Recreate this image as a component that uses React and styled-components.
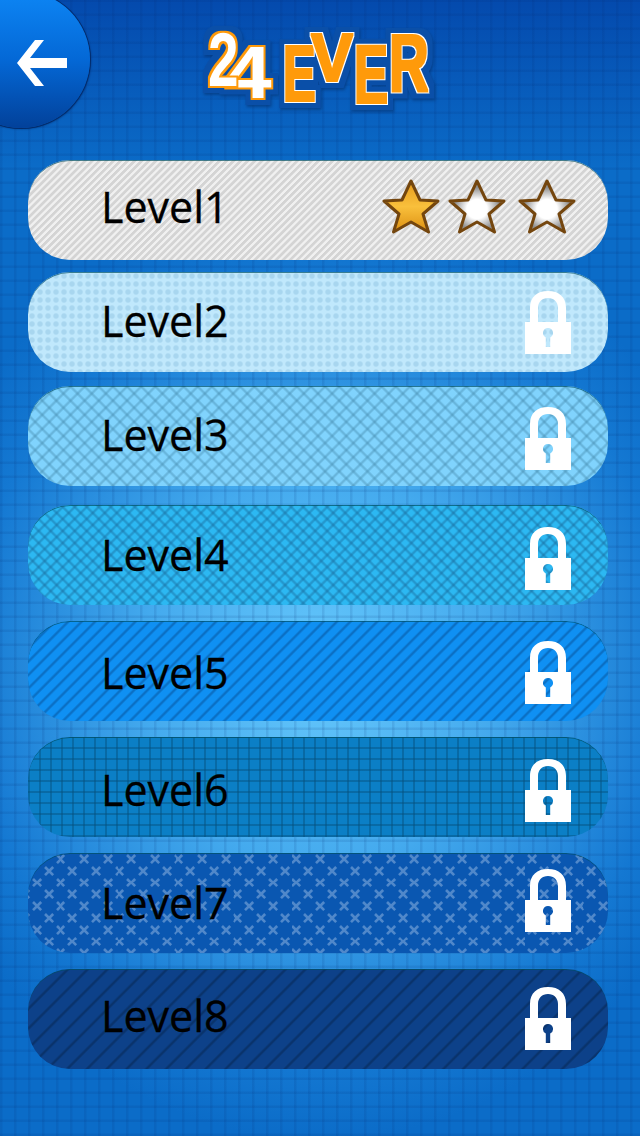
import React from "react";
import styled, { createGlobalStyle, css } from "styled-components";

const GlobalStyle = createGlobalStyle`
  html, body { margin: 0; padding: 0; }
  body { font-family: "Open Sans", "DejaVu Sans", sans-serif; }
`;

const crossTile = encodeURIComponent(
  `<svg xmlns="http://www.w3.org/2000/svg" width="23.6" height="23.6"><g stroke="#7ba6da" stroke-width="2.6" stroke-opacity=".62"><path d="M2 2l8 8M10 2l-8 8M13.8 13.8l8 8M21.8 13.8l-8 8"/></g></svg>`
);

// soft-edged diagonal line, the reference patterns are slightly blurred
const softLine = (angle, color, period) =>
  `repeating-linear-gradient(${angle}deg, ${color} 0, ${color} 0.8px, transparent 2.4px, transparent ${period - 1.6}px, ${color} ${period}px)`;

const patterns = {
  hatch: css`
    background-color: #f0f0f0;
    background-image: repeating-linear-gradient(135deg, #d4d4d4 0, #d4d4d4 2px, #f0f0f0 2.8px, #f0f0f0 4.4px, #d4d4d4 5px);
  `,
  dots: css`
    background-color: #c0e8fc;
    background-image: radial-gradient(circle at 4px 4px, #a8d6ef 0, #a8d6ef 2px, transparent 3.4px);
    background-size: 8px 8px;
  `,
  bigDiamond: css`
    background-color: #80d3fd;
    background-image: ${softLine(45, "rgba(70, 140, 175, 0.42)", 10)}, ${softLine(135, "rgba(70, 140, 175, 0.42)", 10)};
  `,
  smallDiamond: css`
    background-color: #2cb8f2;
    background-image: ${softLine(45, "rgba(25, 110, 160, 0.45)", 8.5)}, ${softLine(135, "rgba(25, 110, 160, 0.45)", 8.5)};
  `,
  stripes: css`
    background-color: #0f90f3;
    background-image: ${softLine(135, "rgba(8, 90, 165, 0.6)", 9.5)};
  `,
  grid: css`
    background-color: #0b7fc6;
    background-image:
      repeating-linear-gradient(90deg, rgba(5, 80, 125, 0.45) 0, rgba(5, 80, 125, 0.45) 1.5px, transparent 2.5px, transparent 11px),
      repeating-linear-gradient(0deg, rgba(5, 80, 125, 0.45) 0, rgba(5, 80, 125, 0.45) 1.5px, transparent 2.5px, transparent 11px);
  `,
  crosses: css`
    background-color: #0a57b1;
    background-image: url("data:image/svg+xml,${crossTile}");
    background-position: 3px 0;
  `,
  darkStripes: css`
    background-color: #0d4189;
    background-image: ${softLine(135, "rgba(8, 45, 95, 0.7)", 14)};
  `,
};

const Page = styled.div`
  position: relative;
  width: 640px;
  height: 1136px;
  overflow: hidden;
  background-color: #0a66c4;
  background-image:
    repeating-linear-gradient(90deg, rgba(0, 40, 110, 0.11) 0, rgba(0, 40, 110, 0.11) 2px, transparent 3px, transparent 14px),
    repeating-linear-gradient(0deg, rgba(0, 40, 110, 0.11) 0, rgba(0, 40, 110, 0.11) 2px, transparent 3px, transparent 14px),
    linear-gradient(180deg, rgba(3, 70, 170, 0.9) 0, rgba(3, 70, 170, 0) 170px),
    radial-gradient(ellipse 420px 470px at 50% 670px, #66c8fc 0, #44aaee 42%, #1478d2 84%, #0b6cc8 100%);
`;

const Header = styled.header`
  display: flex;
  align-items: flex-start;
  height: 160px;
`;

const BackButton = styled.button`
  flex: none;
  width: 138px;
  height: 137px;
  margin: -9px 0 0 -48px;
  padding: 0;
  border: 0;
  border-radius: 50%;
  background: linear-gradient(180deg, #0d86f5 0%, #0468d6 50%, #02419a 100%);
  box-shadow: 0 0 0 1px #032c6c, 1px 1px 2px rgba(0, 20, 70, 0.6);
  svg { display: block; margin-left: 48px; }
`;

const Logo = styled.svg`
  flex: none;
  margin: 20px 0 0 107px;
  overflow: visible;
`;

const LogoGlyph = styled.text`
  font-family: "Liberation Sans", sans-serif;
  font-weight: 700;
  font-size: 100px;
  fill: #000;
`;

const List = styled.main`
  display: flex;
  flex-direction: column;
  padding: 0 32px 0 28px;
`;

const Row = styled.div`
  display: flex;
  align-items: center;
  justify-content: space-between;
  box-sizing: border-box;
  height: 100px;
  margin-top: ${(p) => p.$gap}px;
  padding: 0 32px 0 73px;
  border-radius: 42px;
  box-shadow: inset 0 1px 0 rgba(0, 80, 100, 0.7);
  ${(p) => patterns[p.$pattern]}
`;

const Name = styled.span`
  font-size: 43px;
  line-height: 1;
  color: #000;
  -webkit-text-stroke: 0.3px #000;
  transform: translateY(${(p) => p.$nudge}px);
`;

const Stars = styled.div`
  display: flex;
  gap: 8px;
  margin-bottom: 6px;
  & > svg:last-child { margin-left: 4px; }
`;

const LockIcon = styled.svg`
  display: block;
  flex: none;
  margin-right: 5px;
  transform: translateY(${(p) => p.$nudge}px);
`;

const levels = [
  { name: "Level1", pattern: "hatch", gap: 0, score: 1, text: -4 },
  { name: "Level2", pattern: "dots", gap: 12, lock: 0, text: -2 },
  { name: "Level3", pattern: "bigDiamond", gap: 14, lock: 2, text: -2 },
  { name: "Level4", pattern: "smallDiamond", gap: 19, lock: 3, text: -1 },
  { name: "Level5", pattern: "stripes", gap: 16, lock: 1, text: 1 },
  { name: "Level6", pattern: "grid", gap: 16, lock: 3, text: 2 },
  { name: "Level7", pattern: "crosses", gap: 16, lock: -3, text: -1 },
  { name: "Level8", pattern: "darkStripes", gap: 16, lock: -1, text: -4 },
];

const logoGlyphs = [
  { ch: "4", x: 223, y: 98, sx: 0.84, sy: 0.75, kind: "digit" },
  { ch: "2", x: 206, y: 86, sx: 0.55, sy: 0.76, kind: "digit" },
  { ch: "E", x: 281, y: 101, sx: 0.49, sy: 0.79, kind: "letter" },
  { ch: "V", x: 309, y: 81, sx: 0.63, sy: 0.68, kind: "letter" },
  { ch: "E", x: 352, y: 103, sx: 0.51, sy: 0.84, kind: "letter" },
  { ch: "R", x: 387, y: 91, sx: 0.55, sy: 0.81, kind: "letter" },
];

function Star({ filled, id }) {
  return (
    <svg width="58" height="56" viewBox="-1 -1 58 56">
      <defs>
        {filled ? (
          <linearGradient id={id} x1="0" y1="0" x2="0" y2="1">
            <stop offset="0" stopColor="#e59a1c" />
            <stop offset="0.5" stopColor="#f9c03c" />
            <stop offset="1" stopColor="#dc9012" />
          </linearGradient>
        ) : (
          <radialGradient id={id} cx="0.5" cy="0.55" r="0.42">
            <stop offset="0.45" stopColor="#ffffff" />
            <stop offset="1" stopColor="#909090" />
          </radialGradient>
        )}
      </defs>
      <path
        d="M28 1 37 20 55 21 40 34 45.5 52 28 42 10.5 52 16 34 1 21 19 20Z"
        fill={`url(#${id})`}
        stroke="#74460e"
        strokeWidth="3"
        strokeLinejoin="round"
      />
    </svg>
  );
}

function Lock({ nudge }) {
  return (
    <LockIcon $nudge={nudge} width="46" height="64" viewBox="0 0 46 64">
      <path
        fillRule="evenodd"
        fill="#fff"
        d="M5 32V18C5 7 12 1 23 1S41 7 41 18V32H33V18C33 12 29 8 23 8S13 12 13 18V32H46V64H0V32ZM23 38a5 5 0 0 0-2.2 9.5V57h4.4V47.5A5 5 0 0 0 23 38Z"
      />
    </LockIcon>
  );
}

function LogoDefs() {
  return (
    <defs>
      {/* white letter in an orange outline */}
      <filter id="logoDigit" x="-30%" y="-30%" width="160%" height="160%" colorInterpolationFilters="sRGB">
        <feMorphology in="SourceAlpha" operator="dilate" radius="2" result="outer" />
        <feFlood floodColor="#ff9a0a" />
        <feComposite in2="outer" operator="in" result="ring" />
        <feFlood floodColor="#ffffff" />
        <feComposite in2="SourceAlpha" operator="in" result="core" />
        <feMerge>
          <feMergeNode in="ring" />
          <feMergeNode in="core" />
        </feMerge>
      </filter>
      {/* orange letter in a white outline */}
      <filter id="logoLetter" x="-30%" y="-30%" width="160%" height="160%" colorInterpolationFilters="sRGB">
        <feMorphology in="SourceAlpha" operator="dilate" radius="2" result="outer" />
        <feFlood floodColor="#ffffff" />
        <feComposite in2="outer" operator="in" result="ring" />
        <feMorphology in="SourceAlpha" operator="dilate" radius="1" result="inner" />
        <feFlood floodColor="#ff9a0a" />
        <feComposite in2="inner" operator="in" result="core" />
        <feMerge>
          <feMergeNode in="ring" />
          <feMergeNode in="core" />
        </feMerge>
      </filter>
      {/* dark blue halo round the whole word */}
      <filter id="logoHalo" x="-10%" y="-20%" width="120%" height="140%" colorInterpolationFilters="sRGB">
        <feMorphology in="SourceAlpha" operator="dilate" radius="5" result="wide" />
        <feGaussianBlur in="wide" stdDeviation="0.7" result="soft" />
        <feFlood floodColor="#0a4fa8" />
        <feComposite in2="soft" operator="in" result="halo" />
        <feOffset in="soft" dx="1" dy="2" result="moved" />
        <feGaussianBlur in="moved" stdDeviation="1.5" result="blurred" />
        <feFlood floodColor="#03306e" floodOpacity="0.6" />
        <feComposite in2="blurred" operator="in" result="shade" />
        <feMerge>
          <feMergeNode in="shade" />
          <feMergeNode in="halo" />
          <feMergeNode in="SourceGraphic" />
        </feMerge>
      </filter>
    </defs>
  );
}

export default function App() {
  return (
    <Page>
      <GlobalStyle />
      <Header>
        <BackButton aria-label="Back">
          <svg width="90" height="137" viewBox="0 0 90 137">
            <path fill="#fff" d="M17 72 35 49h9L30 67h37v10H30l14 18h-9Z" />
          </svg>
        </BackButton>
        <Logo width="240" height="92" viewBox="195 20 240 92">
          <LogoDefs />
          <g filter="url(#logoHalo)">
            {logoGlyphs.map((g, i) => (
              <g key={i} filter={g.kind === "digit" ? "url(#logoDigit)" : "url(#logoLetter)"}>
                <LogoGlyph transform={`translate(${g.x} ${g.y}) scale(${g.sx} ${g.sy})`}>{g.ch}</LogoGlyph>
              </g>
            ))}
          </g>
        </Logo>
      </Header>
      <List>
        {levels.map((level) => (
          <Row key={level.name} $pattern={level.pattern} $gap={level.gap}>
            <Name $nudge={level.text}>{level.name}</Name>
            {level.score ? (
              <Stars>
                {[0, 1, 2].map((n) => (
                  <Star key={n} id={`star${n}`} filled={n < level.score} />
                ))}
              </Stars>
            ) : (
              <Lock nudge={level.lock} />
            )}
          </Row>
        ))}
      </List>
    </Page>
  );
}
